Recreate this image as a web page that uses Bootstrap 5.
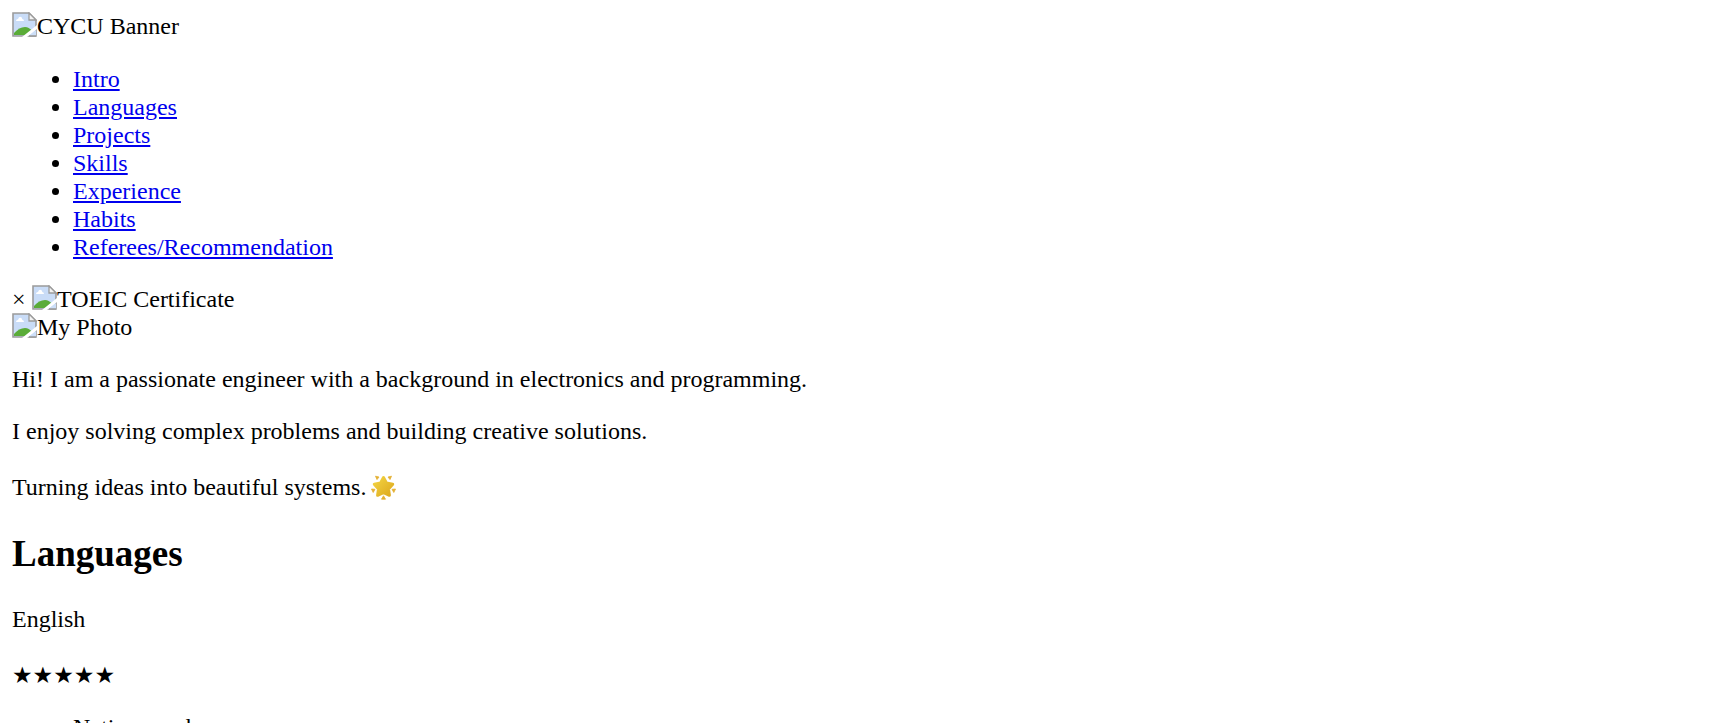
<!DOCTYPE html>
<html lang="en">
<head>
<meta charset="utf-8">
<meta name="viewport" content="width=device-width, initial-scale=1">
<title>Portfolio</title>
<link href="https://cdn.jsdelivr.net/npm/bootstrap@5.3.0/dist/css/bootstrap.min.css" rel="stylesheet">
<style>
  body { padding: 12px; color: #000; background: #fff; font: 24px/28px "Liberation Serif", "Noto Sans CJK SC", serif; }
  p, ul { margin-bottom: 24px; }
  ul { padding-left: 61px; }
  a { color: #00e; }
  h2 { font-size: 37px; line-height: 42px; font-weight: 700; margin: 28px 0 30px; }
  .banner-row { height: 29px; margin-bottom: 24px; }
  .missing { width: 25px; height: 25px; }
  .dismiss { width: 20px; }
  .glow { width: 25px; height: 25px; margin-left: 5px; }
  .tall-line { line-height: 36px; }
  .rating { font-family: "DejaVu Sans", sans-serif; font-size: 23px; line-height: 36px; margin-bottom: 20px; }
</style>
</head>
<body>
<svg class="d-none" aria-hidden="true">
  <symbol id="broken" viewBox="0 0 25 25">
    <path d="M1 1H17L24 8V24H1Z" fill="#c9dcf7"/>
    <path d="M4 9Q4 7 6 7Q7 4 9 5Q11 6 10 7Q12 7 12 9Z" fill="#fff"/>
    <path d="M2 23V21Q7 15 13 15Q17 15 20 19L15 23Z" fill="#5aac38"/>
    <path d="M1 1H17L24 8V24H1Z" fill="none" stroke="#9b9b9b" stroke-width="1.6"/>
    <path d="M17 1V8H24Z" fill="#f4f4f4" stroke="#9b9b9b" stroke-width="1.3"/>
    <path d="M25 13V17L15 25H10Z" fill="#fff"/>
    <path d="M24 18V24H17Z" fill="#cddff8"/>
    <path d="M24 24H17" fill="none" stroke="#9b9b9b" stroke-width="1.6"/>
  </symbol>
</svg>

<div class="banner-row d-flex align-items-start"><svg class="missing" aria-hidden="true"><use href="#broken"/></svg><span>CYCU Banner</span></div>

<nav aria-label="Sections">
  <ul>
    <li><a href="#intro">Intro</a></li>
    <li><a href="#languages">Languages</a></li>
    <li><a href="#projects">Projects</a></li>
    <li><a href="#skills">Skills</a></li>
    <li><a href="#experience">Experience</a></li>
    <li><a href="#habits">Habits</a></li>
    <li><a href="#referees">Referees/Recommendation</a></li>
  </ul>
</nav>

<div class="d-flex align-items-start"><span class="dismiss">×</span><svg class="missing" aria-hidden="true"><use href="#broken"/></svg><span>TOEIC Certificate</span></div>

<section id="intro">
  <div class="d-flex align-items-start mb-4"><svg class="missing" aria-hidden="true"><use href="#broken"/></svg><span>My Photo</span></div>
  <p>Hi! I am a passionate engineer with a background in electronics and programming.</p>
  <p>I enjoy solving complex problems and building creative solutions.</p>
  <p class="tall-line d-flex align-items-center">Turning ideas into beautiful systems.<svg class="glow" viewBox="0 0 25 25" role="img" aria-label="Glowing star">
    <defs><linearGradient id="gold" x2="1" y2="1"><stop stop-color="#f3d443"/><stop offset="1" stop-color="#dda91e"/></linearGradient></defs>
    <path d="M12.5 2.5L15.4 8L21.7 9.2L17.5 13.9L18.4 20.3L12.5 17.7L6.6 20.3L7.5 13.9L3.3 9.2L9.6 8Z" fill="url(#gold)" stroke="url(#gold)" stroke-width="3" stroke-linejoin="round"/>
    <path d="M4.5 1.2L8 2L6 4.6ZM20.5 1.2L17 2L19 4.6ZM.5 14L4 14.3L2.2 17.5ZM24.5 14L21 14.3L22.8 17.5ZM12.5 20.8L14.5 24.2H10.5Z" fill="#e3b034" stroke="#e3b034" stroke-width=".8" stroke-linejoin="round"/>
  </svg></p>
</section>

<section id="languages">
  <h2>Languages</h2>
  <p>English</p>
  <p class="rating">★★★★★</p>
  <ul>
    <li>Native speaker</li>
  </ul>
</section>
<script src="https://cdn.jsdelivr.net/npm/bootstrap@5.3.0/dist/js/bootstrap.bundle.min.js"></script>
</body>
</html>
